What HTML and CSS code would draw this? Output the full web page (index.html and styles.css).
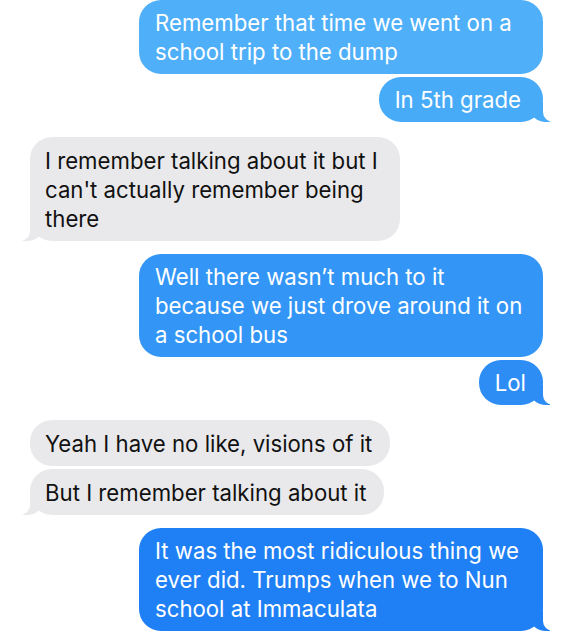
FILE: index.html
```html
<!DOCTYPE html>
<html lang="en">
<head>
  <meta charset="UTF-8">
  <meta name="viewport" content="width=device-width, initial-scale=1.0">
  <title>Messages</title>
  <link rel="stylesheet" href="styles.css">
</head>
<body>
  <div class="thread">
    <div class="msg sent c1">Remember that time we went on a school trip to the dump</div>
    <div class="msg sent c2 tail gap-s">In 5th grade</div>

    <div class="msg received tail gap-l">I remember talking about it but I can't actually remember being there</div>

    <div class="msg sent c3 gap-l">Well there wasn’t much to it because we just drove around it on a school bus</div>
    <div class="msg sent c4 tail gap-s">Lol</div>

    <div class="msg received gap-l">Yeah I have no like, visions of it</div>
    <div class="msg received tail gap-s">But I remember talking about it</div>

    <div class="msg sent c5 tail gap-l">It was the most ridiculous thing we ever did. Trumps when we to Nun school at Immaculata</div>
  </div>
</body>
</html>
```

FILE: styles.css
```css
body {
  margin: 0;
  padding: 0;
  background: #fff;
  font-family: 'Inter', 'Roboto', sans-serif;
}
.thread {
  display: flex;
  flex-direction: column;
  padding: 0 28px 0 30px;
}
.msg {
  position: relative;
  box-sizing: border-box;
  border-radius: 22px;
  font-size: 22.2px;
  line-height: 29px;
}
.gap-s {
  margin-top: 3px;
}
.sent {
  align-self: flex-end;
  max-width: 404px;
  padding: 8px 17px 8px 16px;
  color: #fff;
}
.sent.gap-l {
  margin-top: 13px;
}
.received {
  align-self: flex-start;
  max-width: 370px;
  padding: 8.5px 18px 8.5px 15px;
  background: #e9e9eb;
  color: #111;
}
.received.gap-l {
  margin-top: 15px;
}
/* blue shifts darker down the thread */
.c1 { background: #4fb0f9; }
.c2 { background: #47abf8; padding-right: 22px; }
.c3 { background: #3396f6; }
.c4 { background: #2d8df5; }
.c5 { background: #1f7ff4; }

/* bubble tails */
.tail::before,
.tail::after {
  content: "";
  position: absolute;
  bottom: 0;
  height: 20px;
}
.sent.tail::before {
  right: -7px;
  width: 20px;
  background: inherit;
  border-bottom-left-radius: 16px 14px;
}
.sent.tail::after {
  right: -10px;
  width: 10px;
  background: #fff;
  border-bottom-left-radius: 10px;
}
.received.tail::before {
  left: -7px;
  width: 20px;
  background: inherit;
  border-bottom-right-radius: 16px 14px;
}
.received.tail::after {
  left: -10px;
  width: 10px;
  background: #fff;
  border-bottom-right-radius: 10px;
}
```
